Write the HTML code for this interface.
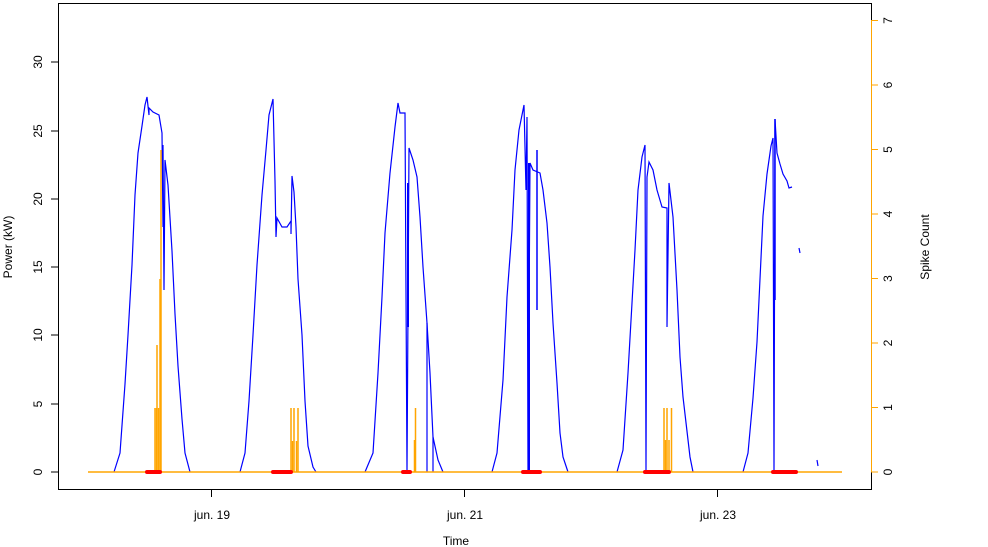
<!DOCTYPE html>
<html><head><meta charset="utf-8"><style>
html,body{margin:0;padding:0;background:#fff}
svg{display:block;font-family:"Liberation Sans",Arial,sans-serif}
</style></head><body>
<svg width="988" height="547" viewBox="0 0 988 547" xmlns="http://www.w3.org/2000/svg">
<rect width="988" height="547" fill="#fff"/>
<!-- box -->
<rect x="58.5" y="3.5" width="813" height="486" fill="none" stroke="#000" stroke-width="1"/>
<!-- left axis ticks -->
<g stroke="#000" stroke-width="1">
<line x1="58" y1="472" x2="51" y2="472"/><line x1="58" y1="404" x2="51" y2="404"/>
<line x1="58" y1="335" x2="51" y2="335"/><line x1="58" y1="267" x2="51" y2="267"/>
<line x1="58" y1="199" x2="51" y2="199"/><line x1="58" y1="131" x2="51" y2="131"/>
<line x1="58" y1="62" x2="51" y2="62"/>
<line x1="211.5" y1="490" x2="211.5" y2="497"/><line x1="464.5" y1="490" x2="464.5" y2="497"/><line x1="717.5" y1="490" x2="717.5" y2="497"/>
</g>
<g font-size="12" fill="#000" text-anchor="middle">
<text transform="translate(42,472) rotate(-90)">0</text>
<text transform="translate(42,404) rotate(-90)">5</text>
<text transform="translate(42,335) rotate(-90)">10</text>
<text transform="translate(42,267) rotate(-90)">15</text>
<text transform="translate(42,199) rotate(-90)">20</text>
<text transform="translate(42,131) rotate(-90)">25</text>
<text transform="translate(42,62) rotate(-90)">30</text>
<text transform="translate(12,247) rotate(-90)">Power (kW)</text>
<text x="212" y="519">jun. 19</text>
<text x="465" y="519">jun. 21</text>
<text x="718" y="519">jun. 23</text>
<text x="456" y="545">Time</text>
<text transform="translate(929,247) rotate(-90)">Spike Count</text>
</g>
<!-- right axis -->
<g stroke="#FFA500" stroke-width="1">
<line x1="871.5" y1="20" x2="871.5" y2="472"/>
<line x1="871" y1="472" x2="878" y2="472"/><line x1="871" y1="407.5" x2="878" y2="407.5"/>
<line x1="871" y1="343" x2="878" y2="343"/><line x1="871" y1="278.5" x2="878" y2="278.5"/>
<line x1="871" y1="214" x2="878" y2="214"/><line x1="871" y1="149.5" x2="878" y2="149.5"/>
<line x1="871" y1="85" x2="878" y2="85"/><line x1="871" y1="20.5" x2="878" y2="20.5"/>
</g>
<g font-size="12" fill="#000" text-anchor="middle">
<text transform="translate(892,472) rotate(-90)">0</text>
<text transform="translate(892,407.5) rotate(-90)">1</text>
<text transform="translate(892,343) rotate(-90)">2</text>
<text transform="translate(892,278.5) rotate(-90)">3</text>
<text transform="translate(892,214) rotate(-90)">4</text>
<text transform="translate(892,149.5) rotate(-90)">5</text>
<text transform="translate(892,85) rotate(-90)">6</text>
<text transform="translate(892,20.5) rotate(-90)">7</text>
</g>
<!-- blue power -->
<g fill="none" stroke="#0000FF" stroke-width="1.2">
<polyline points="114,472 120,453 125,384 128,335 132,265 135,195 138,153 142,126 145,105 147,97 149,115 149,108 153,112 159,115 162,133 163,227 163,145 164,290 165,160 168,185 172,251 175,314 178,366 182,419 185,453 190,472"/>
<polyline points="240,472 245,453 249,401 253,335 257,265 262,195 266,150 269,115 273,99 275,181 276,237 277,218 282,227 287,227 291,221 291,234 292,176 294,192 296,227 298,279 302,335 305,401 308,446 313,467 316,472"/>
<polyline points="365,472 373,453 378,373 382,297 385,233 390,173 395,127 398,103 400,113 405,113 407,472 409,148 413,160 417,177 420,217 423,267 427,323 430,373 433,437 438,460 443,472"/>
<line x1="408" y1="183" x2="408" y2="327" stroke-width="2"/>
<line x1="427" y1="323" x2="427" y2="472"/><line x1="433" y1="437" x2="433" y2="472"/>
<polyline points="492,472 497,453 503,380 507,297 512,230 515,170 519,130 524,105 526,190 527,117 528,472 530,163 533,170 540,173 543,190 547,223 550,267 553,323 557,383 560,433 563,457 568,472"/>
<line x1="529" y1="163" x2="529" y2="472" stroke-width="2"/><line x1="537" y1="150" x2="537" y2="310" stroke-width="1.5"/>
<polyline points="617,472 623,450 628,373 632,303 635,250 638,190 642,157 645,145 646,472 647,177 649,162 653,170 657,190 662,207 667,208 667,327 669,183 673,217 677,290 680,357 683,397 690,457 693,472"/>
<polyline points="743,472 748,453 753,398 757,342 760,279 763,216 767,174 771,146 773,138 774,472 775,119 777,153 780,164 783,174 787,181 789,188 792,187"/>
<line x1="775" y1="119" x2="775" y2="300" stroke-width="1.5"/>
<line x1="799" y1="248" x2="800" y2="253"/><line x1="817" y1="460" x2="818" y2="466"/>
</g>
<!-- orange baseline & spikes -->
<line x1="88" y1="472" x2="842" y2="472" stroke="#FFA500" stroke-width="1.5"/>
<g stroke="#FFA500" stroke-width="1.5">
<line x1="155" y1="472" x2="155" y2="408"/><line x1="156.5" y1="472" x2="156.5" y2="408"/>
<line x1="157" y1="472" x2="157" y2="345"/><line x1="158.5" y1="472" x2="158.5" y2="408"/>
<line x1="160" y1="472" x2="160" y2="279"/><line x1="161" y1="472" x2="161" y2="150"/>
<line x1="291" y1="472" x2="291" y2="408"/><line x1="292.5" y1="472" x2="292.5" y2="441"/>
<line x1="294" y1="472" x2="294" y2="408"/><line x1="296.5" y1="472" x2="296.5" y2="441"/>
<line x1="298" y1="472" x2="298" y2="408"/>
<line x1="414.5" y1="472" x2="414.5" y2="440"/><line x1="415.5" y1="472" x2="415.5" y2="408"/>
<line x1="664" y1="472" x2="664" y2="408"/><line x1="665.5" y1="472" x2="665.5" y2="440"/>
<line x1="667" y1="472" x2="667" y2="408"/><line x1="669" y1="472" x2="669" y2="440"/>
<line x1="671.5" y1="472" x2="671.5" y2="408"/>
</g>
<!-- red segments -->
<g stroke="#FF0000" stroke-width="4" stroke-linecap="round">
<line x1="147" y1="472" x2="160" y2="472"/><line x1="273" y1="472" x2="291" y2="472"/>
<line x1="403" y1="472" x2="410" y2="472"/><line x1="523" y1="472" x2="540" y2="472"/>
<line x1="645" y1="472" x2="669" y2="472"/><line x1="773" y1="472" x2="796" y2="472"/>
</g>
</svg>
</body></html>
